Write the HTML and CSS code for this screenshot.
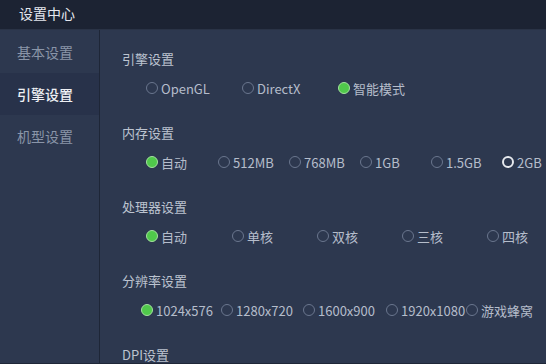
FILE: index.html
```html
<!DOCTYPE html>
<html lang="zh-CN">
<head>
<meta charset="utf-8">
<link rel="stylesheet" href="styles.css">
</head>
<body>
<div class="app">
  <header class="titlebar">设置中心</header>
  <div class="main">
    <nav class="sidebar">
      <div class="nav-item">基本设置</div>
      <div class="nav-item active">引擎设置</div>
      <div class="nav-item">机型设置</div>
    </nav>
    <section class="content">
      <div class="group">
        <div class="label">引擎设置</div>
        <div class="options engine">
          <span class="opt"><i class="radio"></i>OpenGL</span>
          <span class="opt"><i class="radio"></i>DirectX</span>
          <span class="opt"><i class="radio checked"></i>智能模式</span>
        </div>
      </div>
      <div class="group">
        <div class="label">内存设置</div>
        <div class="options memory">
          <span class="opt"><i class="radio checked"></i>自动</span>
          <span class="opt"><i class="radio"></i>512MB</span>
          <span class="opt"><i class="radio"></i>768MB</span>
          <span class="opt"><i class="radio"></i>1GB</span>
          <span class="opt"><i class="radio"></i>1.5GB</span>
          <span class="opt"><i class="radio hover"></i>2GB</span>
        </div>
      </div>
      <div class="group">
        <div class="label">处理器设置</div>
        <div class="options cpu">
          <span class="opt"><i class="radio checked"></i>自动</span>
          <span class="opt"><i class="radio"></i>单核</span>
          <span class="opt"><i class="radio"></i>双核</span>
          <span class="opt"><i class="radio"></i>三核</span>
          <span class="opt"><i class="radio"></i>四核</span>
        </div>
      </div>
      <div class="group">
        <div class="label">分辨率设置</div>
        <div class="options res">
          <span class="opt w80"><i class="radio checked"></i>1024x576</span>
          <span class="opt w82"><i class="radio"></i>1280x720</span>
          <span class="opt w83"><i class="radio"></i>1600x900</span>
          <span class="opt w80"><i class="radio"></i>1920x1080</span>
          <span class="opt"><i class="radio"></i>游戏蜂窝</span>
        </div>
      </div>
      <div class="group last">
        <div class="label">DPI设置</div>
      </div>
    </section>
  </div>
</div>
</body>
</html>
```

FILE: styles.css
```css
* { box-sizing: border-box; }
html, body {
  margin: 0;
  padding: 0;
  width: 546px;
  height: 364px;
  overflow: hidden;
  background: #2d384f;
  font-family: "Noto Sans CJK SC", "Noto Sans", sans-serif;
}
.app {
  width: 546px;
  height: 364px;
  display: flex;
  flex-direction: column;
  border-bottom: 1px solid #1f2738;
  overflow: hidden;
}
.titlebar {
  height: 30px;
  flex: none;
  background: #1c2333;
  color: #e4e7ee;
  font-size: 14px;
  line-height: 27px;
  padding-left: 19px;
  border-bottom: 1px solid #2a3346;
}
.main {
  flex: 1;
  display: flex;
  min-height: 0;
  overflow: hidden;
}
.sidebar {
  width: 100px;
  flex: none;
  background: #2d384f;
  border-right: 1px solid #1e2637;
  padding-top: 1px;
}
.nav-item {
  height: 42px;
  line-height: 42px;
  padding-left: 17px;
  font-size: 14px;
  color: #8a95a8;
}
.nav-item.active {
  background: #28324a;
  color: #eef0f4;
  font-weight: 500;
}
.content {
  flex: 1;
  padding-left: 22px;
  background: #2d384f;
  overflow: hidden;
}
.group {
  height: 74px;
}
.group.last {
  height: auto;
}
.label {
  padding-top: 19px;
  height: 39px;
  line-height: 20px;
  font-size: 13px;
  color: #bcc3cf;
}
.options {
  margin-top: 9px;
  height: 20px;
  display: flex;
  align-items: center;
  padding-left: 24px;
  font-size: 13px;
  color: #b5bdcb;
}
.opt {
  display: inline-flex;
  align-items: center;
  white-space: nowrap;
  flex: none;
}
.engine .opt { width: 96px; }
.memory .opt { width: 71px; }
.memory .opt:first-child { width: 72px; }
.cpu .opt { width: 85px; }
.cpu .opt:first-child { width: 86px; }
.res { padding-left: 19px; }
.res .w80 { width: 80px; }
.res .w82 { width: 82px; }
.res .w83 { width: 83px; }
.radio {
  width: 12px;
  height: 12px;
  border-radius: 50%;
  border: 1px solid #6a768e;
  margin-right: 3px;
  flex: none;
}
.radio.checked {
  background: #50c94b;
  border-color: #a4e29f;
}
.radio.hover {
  border: 2px solid #e6e9ee;
}
```
